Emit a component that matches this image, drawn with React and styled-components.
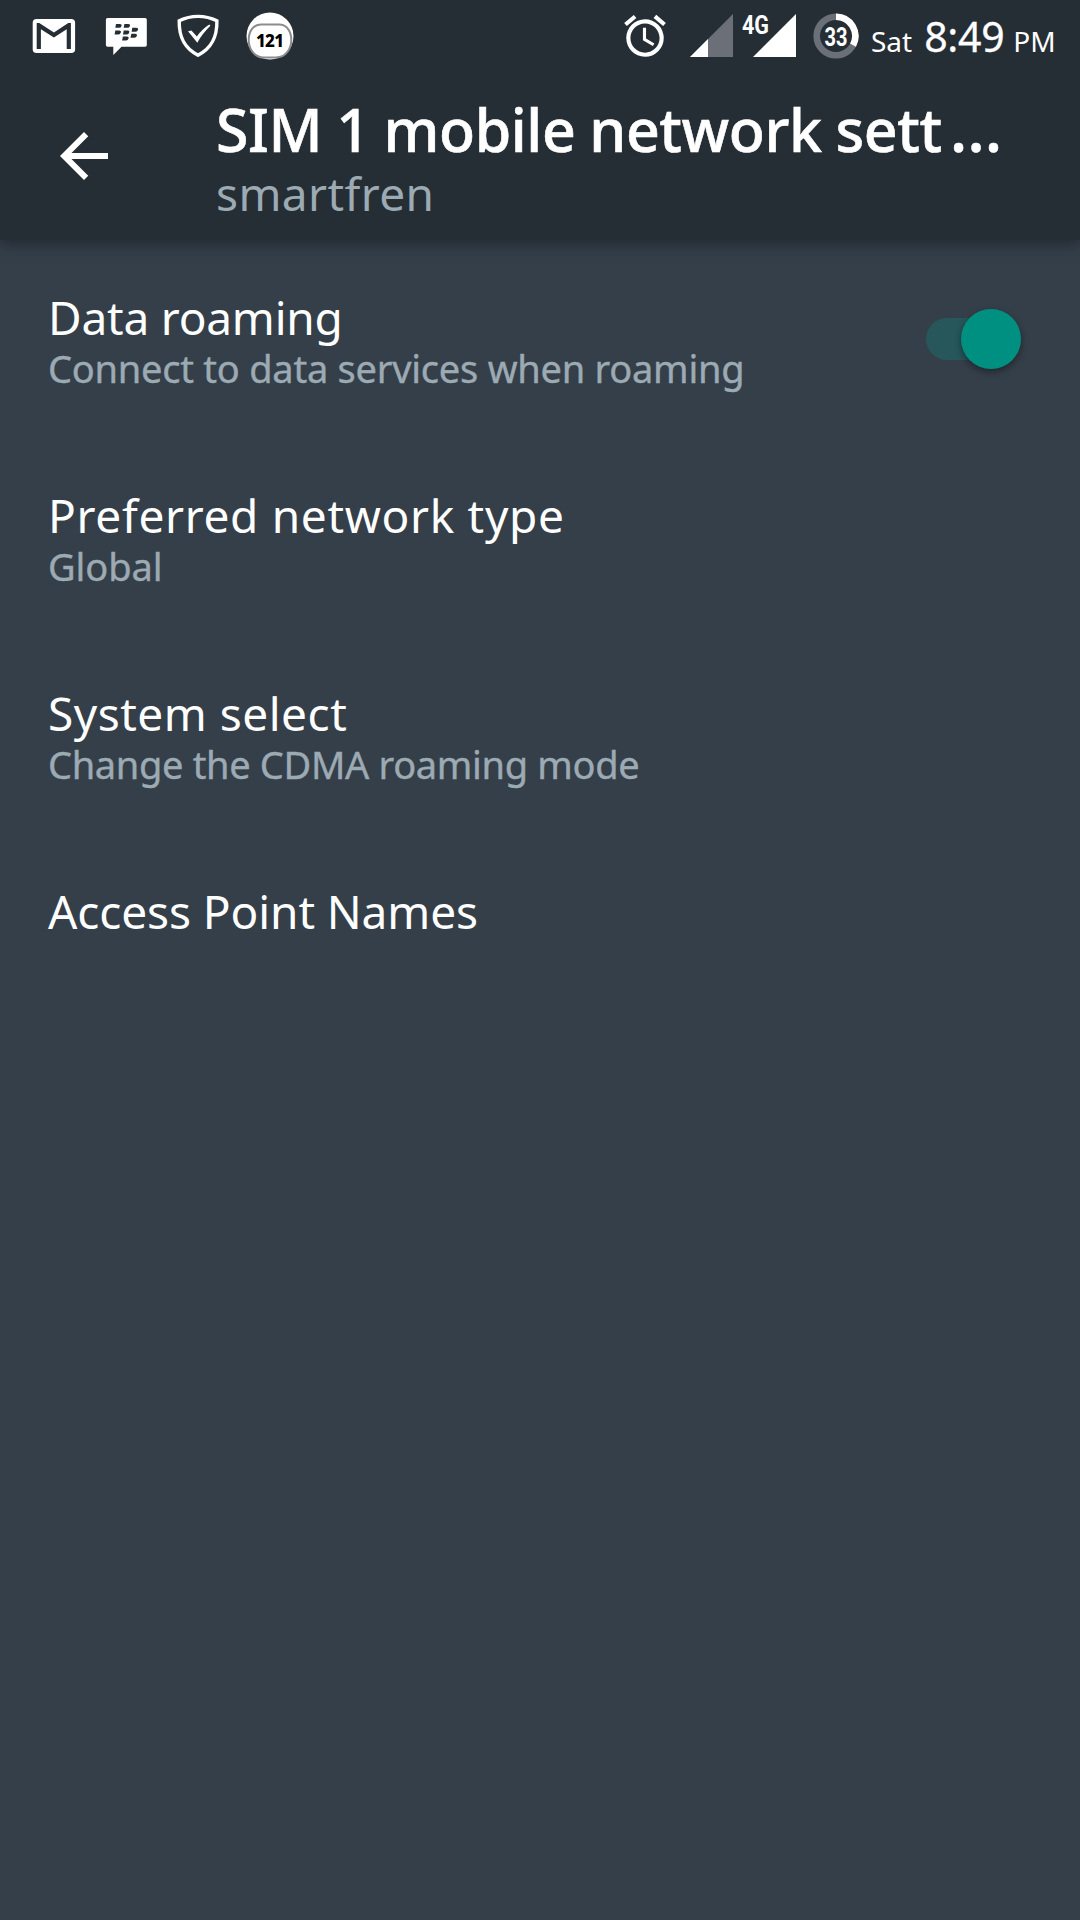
import { useState } from "react";
import styled, { createGlobalStyle } from "styled-components";
import { MdAccessAlarm, MdArrowBack } from "react-icons/md";

const GlobalStyle = createGlobalStyle`
  body {
    margin: 0;
    background-color: #353f49;
  }
`;

const Screen = styled.div`
  width: 1080px;
  height: 1920px;
  overflow: hidden;
  color: white;
  background-color: #353f49;
  font-family: "Noto Sans", "Open Sans", sans-serif;
`;

const StatusBar = styled.div`
  position: relative;
  z-index: 1;
  display: flex;
  justify-content: space-between;
  height: 72px;
  padding-left: 18px;
  background-color: #262e35;

  svg {
    display: block;
    flex: none;
  }
`;

const Notifications = styled.div`
  display: flex;
`;

const System = styled.div`
  display: flex;
  align-items: center;
  width: 460px;
`;

const Signals = styled.div`
  display: flex;
  gap: 9px;
  margin: 0 17px 0 20px;
`;

const Clock = styled.div`
  display: flex;
  align-items: baseline;
  margin-left: 12px;
  padding-top: 5px;
  font-size: 28px;
  line-height: 72px;
  white-space: nowrap;
`;

const Time = styled.span`
  margin: 0 9px 0 12px;
  font-size: 41px;
  letter-spacing: -0.3px;
  -webkit-text-stroke: 0.3px;
`;

const AppBar = styled.header`
  display: flex;
  height: 168px;
  background-color: #262e35;
  box-shadow: 0 4px 14px rgba(20, 27, 33, 0.6);
`;

const BackButton = styled.button`
  width: 168px;
  height: 168px;
  padding: 0;
  border: 0;
  color: white;
  background: transparent;
  text-align: center;

  svg {
    display: block;
    margin: 0 auto;
  }
`;

const Headings = styled.div`
  padding: 21px 0 0 48px;
  white-space: nowrap;
`;

const Heading = styled.h1`
  margin: 0;
  font-size: 59px;
  font-weight: 500;
  line-height: 72px;
  letter-spacing: -0.4px;
  word-spacing: -1px;
  -webkit-text-stroke: 0.6px;
`;

const Ellipsis = styled.span`
  margin-left: 8px;
  font-size: 65px;
  line-height: 0;
`;

const Carrier = styled.div`
  color: #9caab3;
  font-size: 46px;
  line-height: 56px;
  letter-spacing: 0.4px;
`;

const Row = styled.div`
  display: flex;
  justify-content: space-between;
  height: 149px;
  padding: 49px 54px 0 48px;
  white-space: nowrap;
`;

const Label = styled.div`
  font-size: 46px;
  line-height: 56px;
  letter-spacing: ${(p) => p.$spacing}px;
`;

const Summary = styled.div`
  color: #9caab3;
  font-size: 38px;
  line-height: 47px;
  letter-spacing: ${(p) => p.$spacing}px;
  -webkit-text-stroke: 0.4px;
`;

const Track = styled.button`
  display: flex;
  align-items: center;
  justify-content: ${(p) => (p.$on ? "flex-end" : "flex-start")};
  width: 90px;
  height: 42px;
  margin: 29px 10px 0 0;
  padding: 0;
  border: 0;
  border-radius: 21px;
  background-color: ${(p) => (p.$on ? "#27575a" : "#56606a")};
`;

const Thumb = styled.span`
  flex: none;
  width: 60px;
  height: 60px;
  margin-right: -5px;
  border-radius: 50%;
  background-color: ${(p) => (p.$on ? "#009081" : "#b9b9b9")};
  box-shadow: 0 3px 7px rgba(0, 0, 0, 0.4);
`;

const settings = [
  {
    label: "Data roaming",
    labelSpacing: -0.2,
    summary: "Connect to data services when roaming",
    summarySpacing: -0.24,
    toggle: true,
  },
  {
    label: "Preferred network type",
    labelSpacing: 0.68,
    summary: "Global",
    summarySpacing: -0.1,
  },
  {
    label: "System select",
    labelSpacing: 0.5,
    summary: "Change the CDMA roaming mode",
    summarySpacing: -0.33,
  },
  { label: "Access Point Names", labelSpacing: -0.1 },
];

const GmailIcon = () => (
  <svg width="72" height="72" viewBox="0 0 72 72">
    <rect x="14.7" y="19" width="42.4" height="34" rx="3.8" fill="white" />
    <path
      d="M18.7 49V23h2.6l14.6 9.4L50.3 23h2.6v26h-4.2V29.3L35.9 37.5 22.9 29.3V49z"
      fill="#262e35"
    />
  </svg>
);

const BbmIcon = () => (
  <svg width="72" height="72" viewBox="0 0 72 72">
    <path
      d="M17.5 18h37.7q1.6 0 1.6 1.6v25.5q0 1.6-1.6 1.6H31.5L23.3 55v-8.3h-5.8q-1.6 0-1.6-1.6V19.6q0-1.6 1.6-1.6z"
      fill="white"
    />
    <g fill="#262e35">
      <path d="M26 24h3.9q2.2 0 1.6 1.9t-2.3 1.9h-3.9z" />
      <path d="M34.4 24h3.9q2.2 0 1.6 1.9t-2.3 1.9h-3.9z" />
      <path d="M25.3 30.4h3.9q2.2 0 1.6 2t-2.3 2h-3.9z" />
      <path d="M33.7 30.4h3.9q2.2 0 1.6 2t-2.3 2H33z" />
      <path d="M42.3 27.7h3.9q2.3 0 1.8 2t-2.5 2h-3.9z" />
      <path d="M32.9 36.4h3.9q2.2 0 1.7 2.1t-2.5 2.1h-3.9z" />
      <path d="M41.3 33.8h3.9q2.2 0 1.7 2t-2.5 2h-3.9z" />
    </g>
  </svg>
);

const ShieldIcon = () => (
  <svg width="72" height="72" viewBox="0 0 72 72">
    <path
      d="M17.2 20.8C24 17.4 30 16.4 36 16.4s12 1 18.9 4.4C55.2 37 50 48 36 55.2 22 48 16.9 37 17.2 20.8z"
      fill="none"
      stroke="white"
      strokeWidth="3.4"
    />
    <path
      d="M26 31.3l3.4-.7 5.5 6C38 32 43 27 47.5 24.5l.9 1.3C43 31 39 36 35.3 42.7z"
      fill="white"
    />
  </svg>
);

const CounterIcon = () => (
  <svg width="72" height="72" viewBox="0 0 72 72">
    <circle cx="36" cy="36" r="23.5" fill="white" />
    <path
      d="M27 24.5h18c8 0 12.3 7 12.3 15.5S52 57.5 42 57.5H30C20 57.5 14.7 48.5 14.7 40S19 24.5 27 24.5z"
      fill="white"
      stroke="#8d8d8d"
      strokeWidth="2"
    />
    <text
      x="36"
      y="47"
      textAnchor="middle"
      fontSize="17"
      fontWeight="800"
      textLength="28"
    >
      121
    </text>
  </svg>
);

const WeakSignalIcon = () => (
  <svg width="43" height="72" viewBox="0 0 43 72">
    <path d="M43 14v43H0z" fill="#6b7078" />
    <path d="M18 39v18H0z" fill="white" />
  </svg>
);

const FullSignalIcon = () => (
  <svg width="54" height="72" viewBox="0 0 54 72">
    <text
      x="0"
      y="33.7"
      fill="white"
      fontFamily="Roboto"
      fontSize="26"
      fontWeight="700"
      textLength="27"
      lengthAdjust="spacingAndGlyphs"
    >
      4G
    </text>
    <path d="M54 14v43H11z" fill="white" />
  </svg>
);

const BatteryIcon = () => (
  <svg width="46" height="72" viewBox="0 0 46 72">
    <circle cx="23" cy="36" r="19.3" fill="none" stroke="#6b7078" strokeWidth="6.6" />
    <path
      d="M23 16.7A19.3 19.3 0 0 1 40 45.1"
      fill="none"
      stroke="white"
      strokeWidth="6.6"
    />
    <text
      x="11.5"
      y="46"
      fill="white"
      fontFamily="Roboto"
      fontSize="25.5"
      fontWeight="700"
      textLength="23"
      lengthAdjust="spacingAndGlyphs"
    >
      33
    </text>
  </svg>
);

export const App = () => {
  const [roaming, setRoaming] = useState(true);

  return (
    <Screen>
      <GlobalStyle />
      <StatusBar>
        <Notifications>
          <GmailIcon />
          <BbmIcon />
          <ShieldIcon />
          <CounterIcon />
        </Notifications>
        <System>
          <MdAccessAlarm size={50} />
          <Signals>
            <WeakSignalIcon />
            <FullSignalIcon />
          </Signals>
          <BatteryIcon />
          <Clock>
            <span>Sat</span>
            <Time>8:49</Time>
            <span>PM</span>
          </Clock>
        </System>
      </StatusBar>
      <AppBar>
        <BackButton aria-label="Back">
          <MdArrowBack size={72} />
        </BackButton>
        <Headings>
          <Heading>
            SIM 1 mobile network sett<Ellipsis>…</Ellipsis>
          </Heading>
          <Carrier>smartfren</Carrier>
        </Headings>
      </AppBar>
      {settings.map((item) => (
        <Row key={item.label}>
          <div>
            <Label $spacing={item.labelSpacing}>{item.label}</Label>
            {item.summary && (
              <Summary $spacing={item.summarySpacing}>{item.summary}</Summary>
            )}
          </div>
          {item.toggle && (
            <Track
              $on={roaming}
              aria-label={item.label}
              onClick={() => setRoaming(!roaming)}
            >
              <Thumb $on={roaming} />
            </Track>
          )}
        </Row>
      ))}
    </Screen>
  );
};

export default App;
